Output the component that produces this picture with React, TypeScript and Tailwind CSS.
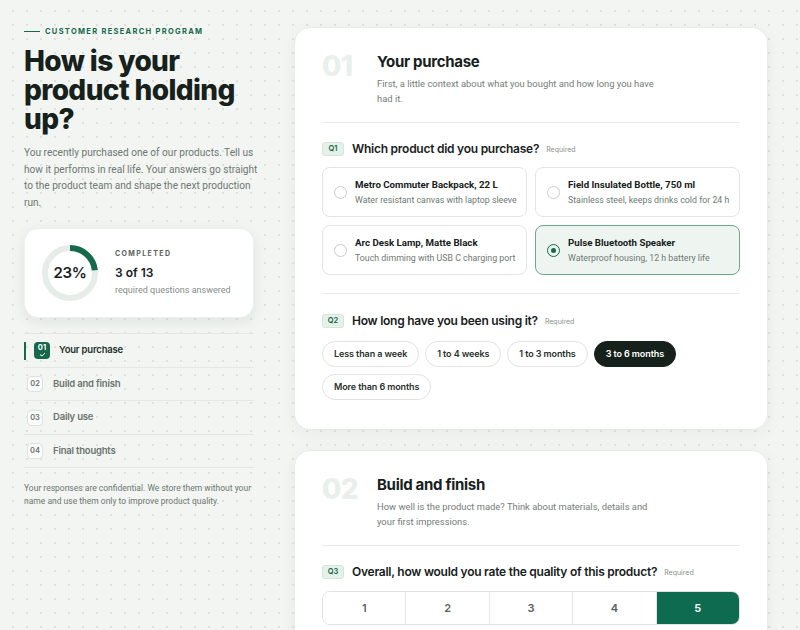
import React from "react";

const H = { fontFamily: "Inter, 'Liberation Sans', sans-serif" };
const B = { fontFamily: "Roboto, 'Liberation Sans', sans-serif" };

function Ring() {
  const r = 25;
  const c = 2 * Math.PI * r;
  return (
    <div className="relative w-[62px] h-[62px] shrink-0">
      <svg width="62" height="62" viewBox="0 0 62 62">
        <circle cx="31" cy="31" r={r} fill="none" stroke="#e6ece8" strokeWidth="6" />
        <circle
          cx="31"
          cy="31"
          r={r}
          fill="none"
          stroke="#17694c"
          strokeWidth="6"
          strokeDasharray={`${c * 0.23} ${c}`}
          transform="rotate(-90 31 31)"
        />
      </svg>
      <div className="absolute inset-0 flex items-center justify-center text-[15px] font-semibold tracking-[-0.3px] text-[#17211c]" style={H}>
        23%
      </div>
    </div>
  );
}

function NavItem({ n, label, active }: { n: string; label: string; active?: boolean }) {
  if (active) {
    return (
      <div className="flex items-center h-[33.5px] border-b border-[#e3e8e4]">
        <div className="w-[2px] h-[18px] bg-[#17694c] mr-[8px]" />
        <div className="w-[16px] h-[17px] rounded-[4px] bg-[#17694c] flex flex-col items-center justify-start pt-[1px] mr-[9px]">
          <span className="text-[7.5px] font-bold text-white leading-[9px]" style={H}>{n}</span>
          <svg width="7" height="5" viewBox="0 0 7 5"><path d="M1 2.5 L3 4 L6 1" stroke="white" strokeWidth="1" fill="none" /></svg>
        </div>
        <span className="text-[9.5px] font-semibold tracking-[-0.2px] text-[#27302b]" style={H}>{label}</span>
      </div>
    );
  }
  return (
    <div className="flex items-center h-[33.5px] border-b border-[#e3e8e4] pl-[3px]">
      <div className="w-[16px] h-[16px] rounded-[4px] border border-[#dde3de] bg-white/60 flex items-center justify-center mr-[10px]">
        <span className="text-[7.5px] font-semibold text-[#6b746f]" style={H}>{n}</span>
      </div>
      <span className="text-[9.5px] font-semibold tracking-[-0.2px] text-[#6b746f]" style={H}>{label}</span>
    </div>
  );
}

function QLabel({ q, text }: { q: string; text: string }) {
  return (
    <div className="flex items-center">
      <span className="w-[22px] h-[14px] rounded-[3px] bg-[#e6f1ea] border border-[#d3e6da] flex items-center justify-center text-[7.5px] font-semibold text-[#17694c] mr-[8px]" style={H}>
        {q}
      </span>
      <span className="text-[12px] font-semibold text-[#17211c] tracking-[-0.25px]" style={H}>{text}</span>
      <span className="text-[7px] text-[#8a928d] ml-[7px] mt-[2px]" style={H}>Required</span>
    </div>
  );
}

function Option({ title, sub, selected }: { title: string; sub: string; selected?: boolean }) {
  return (
    <div
      className={
        "h-[50px] rounded-[8px] border flex items-center pl-[11px] " +
        (selected ? "bg-[#eef5f0] border-[#6fa58b]" : "bg-white border-[#e1e6e2]")
      }
    >
      <div
        className={
          "w-[13px] h-[13px] rounded-full border flex items-center justify-center mr-[8px] shrink-0 " +
          (selected ? "border-[#17694c] border-[1.5px]" : "border-[#c7cec9]")
        }
      >
        {selected && <div className="w-[5px] h-[5px] rounded-full bg-[#17694c]" />}
      </div>
      <div className="flex flex-col">
        <span className="text-[9.7px] font-bold text-[#17211c] leading-[13px]" style={B}>{title}</span>
        <span className="text-[8.8px] text-[#6f7873] leading-[12px] mt-[3px]" style={B}>{sub}</span>
      </div>
    </div>
  );
}

function Pill({ label, selected }: { label: string; selected?: boolean }) {
  return (
    <div
      className={
        "h-[26px] px-[11px] rounded-full border flex items-center text-[9px] font-semibold tracking-[-0.1px] " +
        (selected ? "bg-[#17211c] border-[#17211c] text-white" : "bg-white border-[#dfe4e0] text-[#27302b]")
      }
      style={H}
    >
      {label}
    </div>
  );
}

function SectionHead({ n, title, desc }: { n: string; title: string; desc: string }) {
  return (
    <div className="flex pb-[16px] border-b border-[#e8ece9]">
      <div className="w-[55px] text-[28px] font-extrabold text-[#e9efeb] leading-[28px] tracking-[-0.5px] mt-[-1px]" style={H}>
        {n}
      </div>
      <div className="flex flex-col">
        <div className="text-[15px] font-bold text-[#17211c] leading-[18px] tracking-[-0.3px]" style={H}>{title}</div>
        <div className="text-[9.4px] text-[#747d78] leading-[15px] mt-[5px] w-[286px]" style={B}>{desc}</div>
      </div>
    </div>
  );
}

export default function App() {
  return (
    <div
      className="w-[800px] h-[630px] overflow-hidden bg-[#f2f5f2] flex"
      style={{
        backgroundImage: "radial-gradient(circle, #dbe2dc 0.8px, transparent 1.1px)",
        backgroundSize: "14px 14px",
        backgroundPosition: "6px 4px",
      }}
    >
      {/* Left column */}
      <div className="w-[230px] ml-[24px] pt-[26px] flex flex-col shrink-0">
        <div className="flex items-center">
          <div className="w-[16px] h-[1.5px] bg-[#17694c] mr-[5px]" />
          <span className="text-[7.5px] font-bold tracking-[1.3px] text-[#17694c]" style={H}>CUSTOMER RESEARCH PROGRAM</span>
        </div>
        <h1 className="text-[28px] font-extrabold leading-[29px] tracking-[-0.6px] text-[#17211c] mt-[10px]" style={H}>
          How is your product holding up?
        </h1>
        <p className="text-[10.1px] leading-[16.5px] text-[#6f7873] mt-[11px] w-[238px]" style={B}>
          You recently purchased one of our products. Tell us how it performs in real life. Your answers go straight to the product team and shape the next production run.
        </p>
        <div className="mt-[17px] h-[90px] bg-white rounded-[14px] shadow-[0_4px_14px_rgba(30,50,40,0.08)] border border-[#edf0ee] flex items-center pl-[14px]">
          <Ring />
          <div className="flex flex-col ml-[14px]">
            <span className="text-[7px] font-bold tracking-[1.4px] text-[#59625d]" style={H}>COMPLETED</span>
            <span className="text-[12px] font-semibold text-[#17211c] mt-[4px]" style={H}>3 of 13</span>
            <span className="text-[9px] text-[#858d88] mt-[2px]" style={B}>required questions answered</span>
          </div>
        </div>
        <div className="mt-[15px] border-t border-[#e3e8e4] flex flex-col">
          <NavItem n="01" label="Your purchase" active />
          <NavItem n="02" label="Build and finish" />
          <NavItem n="03" label="Daily use" />
          <NavItem n="04" label="Final thoughts" />
        </div>
        <p className="text-[8.5px] leading-[12.5px] text-[#6f7873] mt-[14px]" style={B}>
          Your responses are confidential. We store them without your name and use them only to improve product quality.
        </p>
      </div>

      {/* Right column */}
      <div className="ml-[40px] w-[474px] pt-[27px] flex flex-col gap-[20px] shrink-0">
        <div className="bg-white rounded-[16px] border border-[#e8ece9] shadow-[0_4px_16px_rgba(30,50,40,0.05)] px-[27px] pt-[25px] pb-[29px]">
          <SectionHead n="01" title="Your purchase" desc="First, a little context about what you bought and how long you have had it." />
          <div className="pt-[17px] pb-[18px] border-b border-[#e8ece9]">
            <QLabel q="Q1" text="Which product did you purchase?" />
            <div className="grid grid-cols-2 gap-[8px] mt-[9px]">
              <Option title="Metro Commuter Backpack, 22 L" sub="Water resistant canvas with laptop sleeve" />
              <Option title="Field Insulated Bottle, 750 ml" sub="Stainless steel, keeps drinks cold for 24 h" />
              <Option title="Arc Desk Lamp, Matte Black" sub="Touch dimming with USB C charging port" />
              <Option title="Pulse Bluetooth Speaker" sub="Waterproof housing, 12 h battery life" selected />
            </div>
          </div>
          <div className="pt-[18px]">
            <QLabel q="Q2" text="How long have you been using it?" />
            <div className="flex flex-wrap gap-x-[6px] gap-y-[7px] mt-[11px]">
              <Pill label="Less than a week" />
              <Pill label="1 to 4 weeks" />
              <Pill label="1 to 3 months" />
              <Pill label="3 to 6 months" selected />
              <Pill label="More than 6 months" />
            </div>
          </div>
        </div>

        <div className="bg-white rounded-[16px] border border-[#e8ece9] shadow-[0_4px_16px_rgba(30,50,40,0.05)] px-[27px] pt-[25px] pb-[29px]">
          <SectionHead n="02" title="Build and finish" desc="How well is the product made? Think about materials, details and your first impressions." />
          <div className="pt-[17px]">
            <QLabel q="Q3" text="Overall, how would you rate the quality of this product?" />
            <div className="flex mt-[10px] h-[34px] rounded-[8px] border border-[#dfe4e0] overflow-hidden">
              {[1, 2, 3, 4, 5].map((n) => (
                <div
                  key={n}
                  className={
                    "flex-1 flex items-center justify-center text-[11px] font-semibold border-r last:border-r-0 " +
                    (n === 5 ? "bg-[#0f6b4f] text-white border-[#0f6b4f]" : "bg-white text-[#59625d] border-[#e3e8e4]")
                  }
                  style={H}
                >
                  {n}
                </div>
              ))}
            </div>
          </div>
        </div>
      </div>
    </div>
  );
}
